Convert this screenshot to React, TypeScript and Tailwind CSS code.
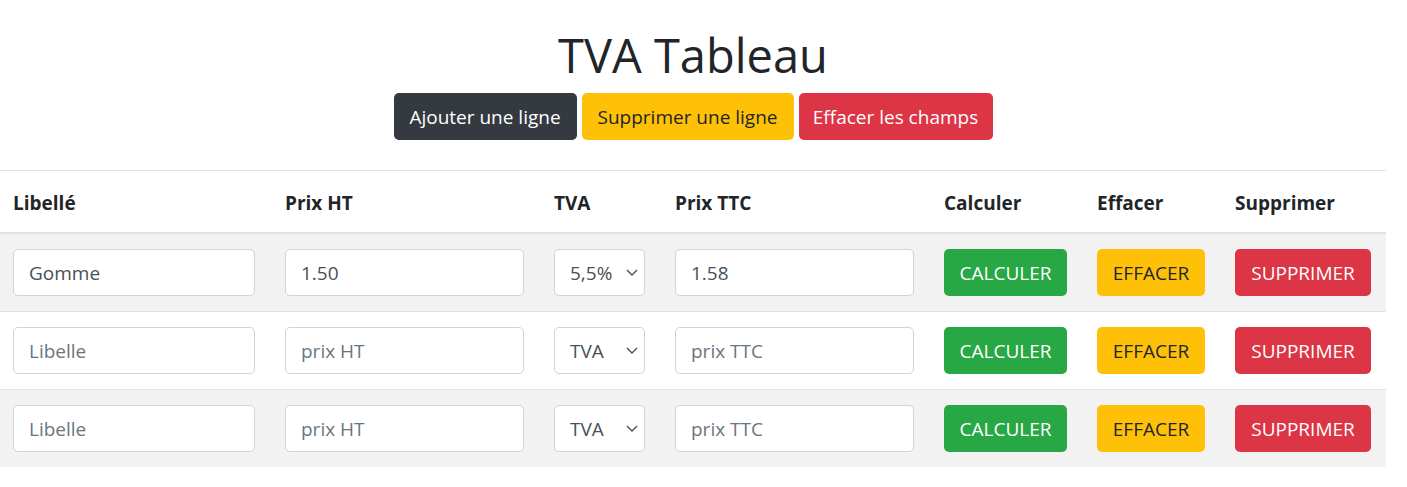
const rows = [
  { libelle: "Gomme", ht: "1.50", tva: "5,5%", ttc: "1.58" },
  { libelle: "", ht: "", tva: "TVA", ttc: "" },
  { libelle: "", ht: "", tva: "TVA", ttc: "" },
];

const Chevron = () => (
  <svg
    className="pointer-events-none absolute right-[7px] top-[20px]"
    width="12"
    height="7"
    viewBox="0 0 12 7"
    fill="none"
  >
    <path d="M1 1l5 5 5-5" stroke="#495057" strokeWidth="1.4" />
  </svg>
);

const inputCls =
  "h-[47px] rounded-[5px] border border-[#ced4da] bg-white px-[15px] pt-[2px] text-[19px] text-[#495057] placeholder:text-[#6c757d] outline-none";

export default function App() {
  return (
    <div className="w-[1386px] bg-white font-['Open_Sans','Noto_Sans',sans-serif] text-[#212529]">
      <div className="flex flex-col items-center pt-[25px]">
        <h1 className="mb-[8px] h-[60px] text-[47px] font-medium leading-[60px]">TVA Tableau</h1>
        <div className="flex gap-[5px]">
          <button className="h-[47px] w-[183px] rounded-[5px] bg-[#343a40] pt-[2px] text-[19px] text-white">
            Ajouter une ligne
          </button>
          <button className="h-[47px] w-[212px] rounded-[5px] bg-[#ffc107] pt-[2px] text-[19px] text-[#212529]">
            Supprimer une ligne
          </button>
          <button className="h-[47px] w-[194px] rounded-[5px] bg-[#dc3545] pt-[2px] text-[19px] text-white">
            Effacer les champs
          </button>
        </div>
      </div>

      <table className="mt-[30px] w-[1386px] table-fixed border-collapse text-left">
        <colgroup>
          <col className="w-[270px]" />
          <col className="w-[269px]" />
          <col className="w-[121px]" />
          <col className="w-[269px]" />
          <col className="w-[153px]" />
          <col className="w-[138px]" />
          <col className="w-[166px]" />
        </colgroup>
        <thead>
          <tr className="border-t border-b-2 border-t-[#dee2e6] border-b-[#dee2e6]">
            {["Libellé", "Prix HT", "TVA", "Prix TTC", "Calculer", "Effacer", "Supprimer"].map((h, i) => (
              <th
                key={h}
                className={`${i === 0 ? "pl-[13px]" : "pl-[15px]"} h-[62px] pt-[4px] pb-0 pr-[15px] text-[19px] font-bold leading-[30px]`}
              >
                {h}
              </th>
            ))}
          </tr>
        </thead>
        <tbody>
          {rows.map((r, idx) => (
            <tr
              key={idx}
              className={`${idx % 2 === 0 ? "bg-[#f2f2f2]" : "bg-white"} ${idx > 0 ? "border-t border-[#dee2e6]" : ""}`}
            >
              <td className="py-[15px] pl-[13px] pr-[15px]">
                <input className={`${inputCls} w-[242px]`} defaultValue={r.libelle} placeholder="Libelle" />
              </td>
              <td className="py-[15px] px-[15px]">
                <input className={`${inputCls} w-[239px]`} defaultValue={r.ht} placeholder="prix HT" />
              </td>
              <td className="py-[15px] px-[15px]">
                <div className="relative w-[91px]">
                  <select
                    className={`${inputCls} w-[91px] appearance-none pl-[15px] pr-0`}
                    defaultValue={r.tva}
                  >
                    <option>TVA</option>
                    <option>5,5%</option>
                    <option>10%</option>
                    <option>20%</option>
                  </select>
                  <Chevron />
                </div>
              </td>
              <td className="py-[15px] px-[15px]">
                <input className={`${inputCls} w-[239px]`} defaultValue={r.ttc} placeholder="prix TTC" />
              </td>
              <td className="py-[15px] px-[15px]">
                <button className="h-[47px] w-[123px] rounded-[5px] bg-[#28a745] pt-[2px] text-[19px] text-white">
                  CALCULER
                </button>
              </td>
              <td className="py-[15px] px-[15px]">
                <button className="h-[47px] w-[108px] rounded-[5px] bg-[#ffc107] pt-[2px] text-[19px] text-[#212529]">
                  EFFACER
                </button>
              </td>
              <td className="py-[15px] px-[15px]">
                <button className="h-[47px] w-[136px] rounded-[5px] bg-[#dc3545] pt-[2px] text-[19px] text-white">
                  SUPPRIMER
                </button>
              </td>
            </tr>
          ))}
        </tbody>
      </table>
    </div>
  );
}
